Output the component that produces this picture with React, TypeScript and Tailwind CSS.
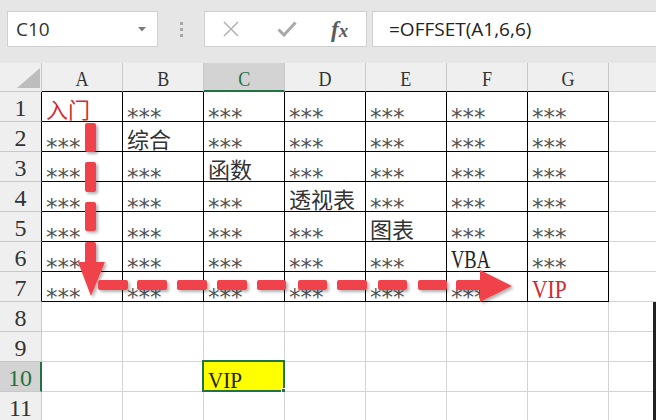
import React from "react";

type Kind = "ast" | "cjk" | "cjkRed" | "vba" | "vipRed" | "vip";
type Content = { t: string; k: Kind } | null;

const COLS = ["A", "B", "C", "D", "E", "F", "G", ""];

const special: Record<string, Content> = {
  "1-0": { t: "入门", k: "cjkRed" },
  "2-1": { t: "综合", k: "cjk" },
  "3-2": { t: "函数", k: "cjk" },
  "4-3": { t: "透视表", k: "cjk" },
  "5-4": { t: "图表", k: "cjk" },
  "6-5": { t: "VBA", k: "vba" },
  "7-6": { t: "VIP", k: "vipRed" },
  "10-2": { t: "VIP", k: "vip" },
};

function getContent(r: number, c: number): Content {
  const key = `${r}-${c}`;
  if (special[key]) return special[key];
  if (r <= 7 && c < 7) return { t: "***", k: "ast" };
  return null;
}

function CellText({ content }: { content: Content }) {
  if (!content) return null;
  switch (content.k) {
    case "ast":
      return (
        <span className="font-['DejaVu_Sans',sans-serif] text-[23px] leading-[12px] text-[#555] translate-y-[10px] inline-block">
          {content.t}
        </span>
      );
    case "cjk":
      return (
        <span className="font-['Noto_Sans_CJK_SC',sans-serif] text-[22px] leading-none text-[#333] translate-y-[1px] inline-block">
          {content.t}
        </span>
      );
    case "cjkRed":
      return (
        <span className="font-['Noto_Sans_CJK_SC',sans-serif] text-[22px] leading-none text-[#d12a30] translate-y-[1px] inline-block">
          {content.t}
        </span>
      );
    case "vba":
      return (
        <span className="font-['Liberation_Serif',serif] text-[25px] leading-none text-[#222] translate-y-[3px] inline-block scale-x-[0.74] origin-left">
          {content.t}
        </span>
      );
    case "vipRed":
      return (
        <span className="font-['Liberation_Serif',serif] text-[25px] leading-none text-[#d12a30] translate-y-[3px] inline-block scale-x-[0.86] origin-left">
          {content.t}
        </span>
      );
    case "vip":
      return (
        <span className="font-['Liberation_Serif',serif] text-[24px] leading-none text-[#222] translate-y-[3px] inline-block scale-x-[0.88] origin-left">
          {content.t}
        </span>
      );
  }
}

function HeaderRow() {
  return (
    <div className="flex h-[29px] bg-[#efefef]">
      <div className="w-[42px] shrink-0 h-full border-r border-b border-[#c8c8c8] relative">
        <svg width="42" height="29" className="absolute left-0 top-0">
          <polygon points="17,25 40,25 40,5" fill="#bdbdbd" />
        </svg>
      </div>
      {COLS.map((c, i) => {
        const sel = i === 2;
        const inTable = i < 7;
        return (
          <div
            key={i}
            className={
              "w-[81px] shrink-0 h-full border-r flex items-center justify-center " +
              (sel
                ? "bg-[#d3d3d3] border-b-2 border-b-[#217346] border-r-[#c8c8c8] "
                : inTable
                ? "border-b border-b-[#000] border-r-[#c8c8c8] "
                : "border-b border-b-[#c8c8c8] border-r-[#c8c8c8] ")
            }
          >
            <span
              className={
                "font-['Liberation_Serif',serif] text-[22px] leading-none inline-block scale-x-[0.82] translate-y-[2px] " +
                (sel ? "text-[#217346]" : "text-[#333]")
              }
            >
              {c}
            </span>
          </div>
        );
      })}
    </div>
  );
}

function DataRow({ r }: { r: number }) {
  const sel = r === 10;
  return (
    <div className="flex h-[30px]">
      <div
        className={
          "w-[42px] shrink-0 h-full border-b border-b-[#c8c8c8] flex items-center justify-center " +
          (sel
            ? "bg-[#d3d3d3] border-r-2 border-r-[#217346]"
            : r <= 7
            ? "bg-[#efefef] border-r border-r-[#000]"
            : "bg-[#efefef] border-r border-r-[#c8c8c8]")
        }
      >
        <span
          className={
            "font-['Liberation_Serif',serif] text-[24px] leading-none translate-y-[1px] inline-block " +
            (sel ? "text-[#217346]" : "text-[#333]")
          }
        >
          {r}
        </span>
      </div>
      {COLS.map((c, i) => {
        const black = r <= 7 && i < 7;
        const content = getContent(r, i);
        const isSel = r === 10 && i === 2;
        return (
          <div
            key={i}
            className={
              "w-[81px] shrink-0 h-full border-r border-b relative flex items-center pl-[4px] whitespace-nowrap " +
              (black ? "border-[#000] " : "border-[#d4d4d4] ") +
              (isSel ? "bg-[#ffff00]" : "bg-white")
            }
          >
            <CellText content={content} />
            {isSel && (
              <>
                <div className="absolute left-[-2px] top-[-2px] right-[-1px] bottom-[-1px] border-2 border-[#217346]" />
                <div className="absolute right-[-3px] bottom-[-3px] w-[6px] h-[6px] bg-[#217346] border border-white" />
              </>
            )}
          </div>
        );
      })}
    </div>
  );
}

function Arrows() {
  const red = "#f0434b";
  const vDashes = [
    [123, 152],
    [162, 192],
    [202, 231],
    [242, 266],
  ];
  const hDashes = [
    [98, 128],
    [137, 167],
    [177, 207],
    [217, 247],
    [257, 286],
    [298, 327],
    [337, 367],
    [378, 407],
    [418, 447],
    [456, 484],
  ];
  return (
    <svg
      width="656"
      height="420"
      className="absolute left-0 top-0 pointer-events-none"
    >
      <defs>
        <filter id="sh" x="-20%" y="-20%" width="140%" height="140%">
          <feDropShadow dx="2" dy="2" stdDeviation="1.5" floodColor="#000" floodOpacity="0.3" />
        </filter>
      </defs>
      <g fill={red} filter="url(#sh)">
        {vDashes.map(([a, b], i) => (
          <rect key={"v" + i} x={85} y={a} width={11} height={b - a} rx={2} />
        ))}
        <polygon points="78,262 105,262 91,296" />
        {hDashes.map(([a, b], i) => (
          <rect key={"h" + i} x={a} y={280} width={b - a} height={10} rx={2} />
        ))}
        <polygon points="480,270 512,286 480,302" />
      </g>
    </svg>
  );
}

function TopBar() {
  return (
    <div className="h-[63px] bg-[#e6e6e6] flex items-start pt-[11px] pl-[7px]">
      <div className="w-[151px] h-[36px] shrink-0 bg-white border border-[#d0d0d0] flex items-center pl-[8px] pr-[10px] justify-between">
        <span className="font-['Open_Sans',sans-serif] text-[19px] text-[#333] leading-none">C10</span>
        <svg width="8" height="5" className="mr-[1px]">
          <polygon points="0,0 8,0 4,4.5" fill="#7a7a7a" />
        </svg>
      </div>
      <div className="w-[46px] h-[36px] shrink-0 flex flex-col items-center justify-center gap-[3px]">
        <div className="w-[3px] h-[3px] bg-[#a8a8a8]" />
        <div className="w-[3px] h-[3px] bg-[#a8a8a8]" />
        <div className="w-[3px] h-[3px] bg-[#a8a8a8]" />
      </div>
      <div className="w-[163px] h-[36px] shrink-0 bg-white border border-[#d0d0d0] flex items-center pl-[17px]">
        <svg width="18" height="16" viewBox="0 0 18 16">
          <path d="M2 1 L16 15 M16 1 L2 15" stroke="#b5b5b5" strokeWidth="1.6" fill="none" />
        </svg>
        <svg width="20" height="16" viewBox="0 0 20 16" className="ml-[37px]">
          <path d="M1.5 8.5 L7 14 L18.5 1.5" stroke="#a9a9a9" strokeWidth="3" fill="none" />
        </svg>
        <span className="ml-[34px] font-['Liberation_Serif',serif] italic text-[23px] leading-none text-[#5a5a5a] font-semibold">
          f<span className="text-[19px]">x</span>
        </span>
      </div>
      <div className="ml-[5px] flex-1 h-[36px] bg-white border border-[#d0d0d0] border-r-0 flex items-center pl-[16px]">
        <span className="font-['Open_Sans',sans-serif] text-[19px] text-[#222] leading-none whitespace-nowrap">
          =OFFSET(A1,6,6)
        </span>
      </div>
    </div>
  );
}

export default function App() {
  const rows = Array.from({ length: 11 }, (_, i) => i + 1);
  return (
    <div className="w-[656px] h-[420px] overflow-hidden relative bg-white">
      <TopBar />
      <HeaderRow />
      {rows.map((r) => (
        <DataRow key={r} r={r} />
      ))}
      <Arrows />
      <div className="absolute left-[653px] top-[302px] w-[3px] h-[118px] bg-[#222]" />
    </div>
  );
}
